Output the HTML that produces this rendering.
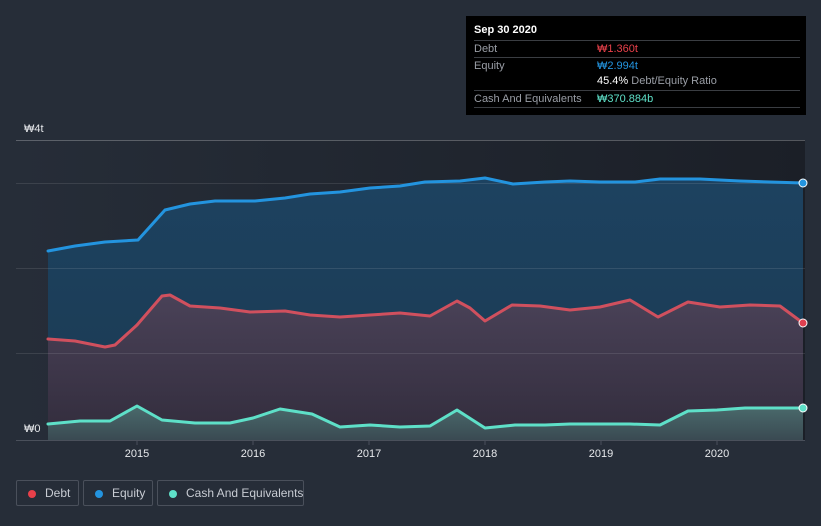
<!DOCTYPE html>
<html><head><meta charset="utf-8"><style>
html,body{margin:0;width:821px;height:526px;overflow:hidden}
body{background:#262d38;font-family:"Liberation Sans",sans-serif;position:relative}
.tt{position:absolute;left:466px;top:16px;width:340px;height:99px;background:#000;color:#fff;font-size:11px}
.tt .h{position:absolute;left:8px;top:8px;font-weight:bold;font-size:11px}
.row{position:absolute;left:8px;width:326px;border-top:1px solid #3a3d42;height:16px;line-height:16px;white-space:nowrap}
.row .l{position:absolute;left:0;color:#9a9ea6}
.row .v{position:absolute;left:123px}
.leg{position:absolute;top:480px;height:26px;border:1px solid #4a505b;border-radius:2px;color:#c8ccd3;font-size:12px;line-height:25px;box-sizing:border-box;white-space:nowrap}
.leg i{position:absolute;left:11px;top:9px;width:8px;height:8px;border-radius:50%}
.leg span{position:absolute;left:28px}
</style></head><body>
<svg width="821" height="526" style="position:absolute;left:0;top:0">
<defs>
<linearGradient id="bg" x1="0" x2="1" y1="0" y2="0"><stop offset="0" stop-color="#262d38"/><stop offset="1" stop-color="#1b1f27"/></linearGradient>
<linearGradient id="eq" x1="0" x2="0" y1="0" y2="1"><stop offset="0" stop-color="#1d4260"/><stop offset="1" stop-color="#1b3a52"/></linearGradient>
<linearGradient id="db" x1="0" x2="0" y1="0" y2="1"><stop offset="0" stop-color="#4a4258"/><stop offset="1" stop-color="#322c3c"/></linearGradient>
<linearGradient id="cs" x1="0" x2="0" y1="0" y2="1"><stop offset="0" stop-color="#4a6a6c"/><stop offset="1" stop-color="#3a4a52"/></linearGradient>
</defs>
<rect x="16" y="140" width="789" height="300" fill="url(#bg)"/>
<path d="M48,251 L75,246 L105,242 L138,240 L165,210 L190,204 L215,201 L255,201 L285,198 L310,194 L340,192 L370,188 L400,186 L425,182 L460,181 L485,178 L513,184 L545,182 L570,181 L600,182 L635,182 L660,179 L700,179 L740,181 L803,183 L803,440 L48,440Z" fill="url(#eq)"/>
<path d="M48,339 L75,341 L105,347 L115,345 L137,325 L162,296 L170,295 L190,306 L220,308 L250,312 L285,311 L310,315 L340,317 L370,315 L400,313 L430,316 L457,301 L470,308 L485,321 L512,305 L540,306 L570,310 L600,307 L630,300 L658,317 L688,302 L720,307 L750,305 L780,306 L803,323 L803,440 L48,440Z" fill="url(#db)"/>
<path d="M48,424 L80,421 L110,421 L137,406 L162,420 L195,423 L230,423 L253,418 L280,409 L312,414 L340,427 L370,425 L400,427 L430,426 L457,410 L485,428 L515,425 L545,425 L570,424 L600,424 L630,424 L660,425 L688,411 L717,410 L745,408 L803,408 L803,440 L48,440Z" fill="url(#cs)"/>
<g stroke="#ffffff" stroke-opacity="0.1" stroke-width="1">
<line x1="16" y1="140.5" x2="805" y2="140.5" stroke-opacity="0.25"/>
<line x1="16" y1="183.5" x2="805" y2="183.5"/>
<line x1="16" y1="268.5" x2="805" y2="268.5"/>
<line x1="16" y1="353.5" x2="805" y2="353.5"/>
</g>
<line x1="16" y1="440.5" x2="805" y2="440.5" stroke="#4a505b"/>
<g fill="none" stroke-width="3" stroke-linejoin="round" stroke-linecap="round">
<path stroke="#2394df" d="M48,251 L75,246 L105,242 L138,240 L165,210 L190,204 L215,201 L255,201 L285,198 L310,194 L340,192 L370,188 L400,186 L425,182 L460,181 L485,178 L513,184 L545,182 L570,181 L600,182 L635,182 L660,179 L700,179 L740,181 L803,183"/>
<path stroke="#d0505e" d="M48,339 L75,341 L105,347 L115,345 L137,325 L162,296 L170,295 L190,306 L220,308 L250,312 L285,311 L310,315 L340,317 L370,315 L400,313 L430,316 L457,301 L470,308 L485,321 L512,305 L540,306 L570,310 L600,307 L630,300 L658,317 L688,302 L720,307 L750,305 L780,306 L803,323"/>
<path stroke="#5ee0c8" d="M48,424 L80,421 L110,421 L137,406 L162,420 L195,423 L230,423 L253,418 L280,409 L312,414 L340,427 L370,425 L400,427 L430,426 L457,410 L485,428 L515,425 L545,425 L570,424 L600,424 L630,424 L660,425 L688,411 L717,410 L745,408 L803,408"/>
</g>
<circle cx="803" cy="183" r="4" fill="#2394df" stroke="#fff" stroke-width="1"/>
<circle cx="803" cy="323" r="4" fill="#e04050" stroke="#fff" stroke-width="1"/>
<circle cx="803" cy="408" r="4" fill="#5ee0c8" stroke="#fff" stroke-width="1"/>
<g stroke="#4a505b"><line x1="137" y1="440" x2="137" y2="445"/><line x1="253" y1="440" x2="253" y2="445"/><line x1="369" y1="440" x2="369" y2="445"/><line x1="485" y1="440" x2="485" y2="445"/><line x1="601" y1="440" x2="601" y2="445"/><line x1="717" y1="440" x2="717" y2="445"/></g>
<g fill="#e6e8eb" font-size="11" font-family="Liberation Sans,sans-serif" text-anchor="middle">
<text x="137" y="457">2015</text><text x="253" y="457">2016</text><text x="369" y="457">2017</text><text x="485" y="457">2018</text><text x="601" y="457">2019</text><text x="717" y="457">2020</text>
</g>
<g fill="#e6e8eb" font-size="11" font-family="Liberation Sans,sans-serif">
<text x="24" y="132">₩4t</text><text x="24" y="432">₩0</text>
</g>
</svg>
<div class="tt">
<div class="h">Sep 30 2020</div>
<div class="row" style="top:24px"><span class="l">Debt</span><span class="v" style="color:#e8404a">₩1.360t</span></div>
<div class="row" style="top:41px"><span class="l">Equity</span><span class="v" style="color:#2394df">₩2.994t</span></div>
<div class="row" style="top:57px;border-top:none"><span class="v"><b style="font-weight:normal;color:#fff">45.4%</b> <span style="color:#9a9ea6">Debt/Equity Ratio</span></span></div>
<div class="row" style="top:74px;border-bottom:1px solid #3a3d42"><span class="l">Cash And Equivalents</span><span class="v" style="color:#5ee0c8">₩370.884b</span></div>
</div>
<div class="leg" style="left:16px;width:63px"><i style="background:#e8404a"></i><span>Debt</span></div>
<div class="leg" style="left:83px;width:70px"><i style="background:#2394df"></i><span>Equity</span></div>
<div class="leg" style="left:157px;width:147px"><i style="background:#5ee0c8"></i><span>Cash And Equivalents</span></div>
</body></html>
